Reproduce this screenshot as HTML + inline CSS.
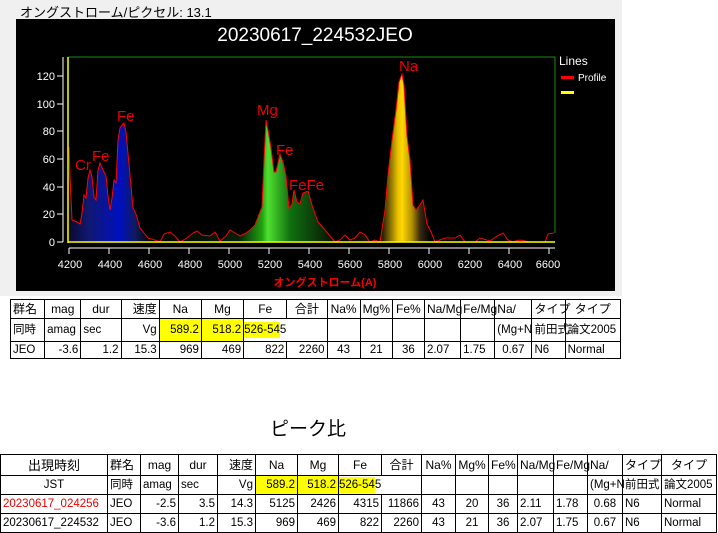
<!DOCTYPE html>
<html><head><meta charset="utf-8"><style>
body{margin:0;width:718px;height:531px;background:#fff;position:relative;overflow:hidden;font-family:"Liberation Sans","Noto Sans CJK JP",sans-serif}
.panel{position:absolute;left:0;top:0;width:622px;height:296px;background:#f0f0f0}
.lbl{position:absolute;left:20px;top:2px;font-size:13px;color:#000}
table{position:absolute;border-collapse:collapse;font-size:11.5px;table-layout:fixed}
td{border:1px solid #000;padding:0 2px;height:16px;white-space:nowrap;overflow:visible;line-height:15px}
.r{text-align:right}.c{text-align:center}.y{background:#ff0}
.h td{font-size:12px}
.t2 tr.b td{height:18px}
</style></head><body>
<div class="panel"></div>
<div class="lbl">オングストローム/ピクセル: 13.1</div>
<svg style="position:absolute;left:0;top:0" width="718" height="300">
<defs><linearGradient id="g" gradientUnits="userSpaceOnUse" x1="69" y1="0" x2="554" y2="0">
<stop offset="0" stop-color="#0a0a30"/><stop offset="0.04" stop-color="#101870"/><stop offset="0.105" stop-color="#0010c0"/><stop offset="0.136" stop-color="#101a60"/><stop offset="0.17" stop-color="#000"/><stop offset="0.35" stop-color="#05200a"/><stop offset="0.398" stop-color="#22a010"/><stop offset="0.41" stop-color="#50e030"/><stop offset="0.456" stop-color="#107010"/><stop offset="0.517" stop-color="#0a3008"/><stop offset="0.56" stop-color="#000"/><stop offset="0.647" stop-color="#2a2008"/><stop offset="0.678" stop-color="#e8c000"/><stop offset="0.687" stop-color="#ffd800"/><stop offset="0.707" stop-color="#b09000"/><stop offset="0.724" stop-color="#3a2a10"/><stop offset="0.745" stop-color="#000"/></linearGradient></defs>
<rect x="16" y="19" width="599" height="272" fill="#000"/>
<text x="315" y="41" fill="#fff" font-size="19" text-anchor="middle">20230617_224532JEO</text>
<polyline points="68,57 555,57 555,233" fill="none" stroke="#1a8a1a" stroke-width="1"/>
<path id="p" d="M69,147 L70,177 72,220 77,222 80,224 82,213 84,195 86,198 88,178 90,170 92,177 94,197 96,200 98,170 100,163 103,170 106,176 108,196 110,210 112,198 114,180 116,183 118,140 120,128 122,125 124,123 126,132 130,175 133,208 136,214 140,228 144,233 148,238 155,240 160,242 164,234 170,232 175,236 180,242 187,238 193,233 197,231 202,235 210,236 215,232 220,241 226,236 230,230 235,233 240,236 246,233 250,230 255,225 258,217 262,207 264,160 266,120 268,130 271,148 274,172 276,172 280,154 283,162 286,176 289,208 292,204 294,190 297,202 300,204 303,193 308,191 312,205 318,222 325,230 330,236 335,242 340,240 345,235 350,240 355,238 360,232 365,235 370,242 375,240 380,242 385,210 388,175 392,140 396,110 399,82 402,74 404,85 407,136 410,160 413,205 416,210 420,205 423,200 427,224 431,232 435,242 445,238 455,238 460,235 465,242 475,242 480,238 490,241 497,236 503,233 508,240 512,242 520,240 530,242 545,242 548,234 554,233" fill="none"/>
<path d="M69,242 L69,147 70,177 72,220 77,222 80,224 82,213 84,195 86,198 88,178 90,170 92,177 94,197 96,200 98,170 100,163 103,170 106,176 108,196 110,210 112,198 114,180 116,183 118,140 120,128 122,125 124,123 126,132 130,175 133,208 136,214 140,228 144,233 148,238 155,240 160,242 164,234 170,232 175,236 180,242 187,238 193,233 197,231 202,235 210,236 215,232 220,241 226,236 230,230 235,233 240,236 246,233 250,230 255,225 258,217 262,207 264,160 266,120 268,130 271,148 274,172 276,172 280,154 283,162 286,176 289,208 292,204 294,190 297,202 300,204 303,193 308,191 312,205 318,222 325,230 330,236 335,242 340,240 345,235 350,240 355,238 360,232 365,235 370,242 375,240 380,242 385,210 388,175 392,140 396,110 399,82 402,74 404,85 407,136 410,160 413,205 416,210 420,205 423,200 427,224 431,232 435,242 Z" fill="url(#g)"/>
<use href="#p" stroke="#f00" stroke-width="1"/>
<line x1="68" y1="57" x2="68" y2="243" stroke="#ff0" stroke-width="1.5"/>
<line x1="68" y1="242" x2="555" y2="242" stroke="#ff0" stroke-width="1.5"/>
<g stroke="#fff" stroke-width="1"><line x1="63" y1="57" x2="63" y2="242"/>
<line x1="57" y1="242" x2="63" y2="242"/><line x1="57" y1="214" x2="63" y2="214"/><line x1="57" y1="187" x2="63" y2="187"/><line x1="57" y1="159" x2="63" y2="159"/><line x1="57" y1="131" x2="63" y2="131"/><line x1="57" y1="104" x2="63" y2="104"/><line x1="57" y1="76" x2="63" y2="76"/>
<line x1="69" y1="248" x2="555" y2="248"/>
<line x1="69" y1="248" x2="69" y2="254"/><line x1="109" y1="248" x2="109" y2="254"/><line x1="149" y1="248" x2="149" y2="254"/><line x1="189" y1="248" x2="189" y2="254"/><line x1="229" y1="248" x2="229" y2="254"/><line x1="269" y1="248" x2="269" y2="254"/><line x1="309" y1="248" x2="309" y2="254"/><line x1="349" y1="248" x2="349" y2="254"/><line x1="389" y1="248" x2="389" y2="254"/><line x1="429" y1="248" x2="429" y2="254"/><line x1="469" y1="248" x2="469" y2="254"/><line x1="509" y1="248" x2="509" y2="254"/><line x1="549" y1="248" x2="549" y2="254"/></g>
<g fill="#fff" font-size="11" text-anchor="end"><text x="55" y="246">0</text><text x="55" y="218">20</text><text x="55" y="191">40</text><text x="55" y="163">60</text><text x="55" y="135">80</text><text x="55" y="108">100</text><text x="55" y="80">120</text></g>
<g fill="#fff" font-size="11" text-anchor="middle"><text x="70" y="268">4200</text><text x="110" y="268">4400</text><text x="150" y="268">4600</text><text x="190" y="268">4800</text><text x="230" y="268">5000</text><text x="270" y="268">5200</text><text x="310" y="268">5400</text><text x="350" y="268">5600</text><text x="390" y="268">5800</text><text x="430" y="268">6000</text><text x="470" y="268">6200</text><text x="510" y="268">6400</text><text x="548" y="268">6600</text></g>
<text x="325" y="286" fill="#f00" font-size="11" font-weight="bold" text-anchor="middle">オングストローム(A)</text>
<g fill="#e00" font-size="15"><text x="75" y="170">Cr</text><text x="92" y="161">Fe</text><text x="117" y="121">Fe</text><text x="257" y="115">Mg</text><text x="276" y="155">Fe</text><text x="289" y="190">FeFe</text><text x="399" y="71">Na</text></g>
<text x="559" y="65" fill="#fff" font-size="12">Lines</text>
<rect x="561" y="76" width="13" height="3" fill="#f00"/><text x="578" y="81" fill="#fff" font-size="10">Profile</text>
<rect x="561" y="91" width="13" height="3" fill="#ff0"/>
</svg>
<table style="left:10px;top:299px;width:611px">
<colgroup><col style="width:34px"><col style="width:36px"><col style="width:40px"><col style="width:38px"><col style="width:42px"><col style="width:42px"><col style="width:43px"><col style="width:40px"><col style="width:33px"><col style="width:32px"><col style="width:32px"><col style="width:36px"><col style="width:34px"><col style="width:37px"><col style="width:33px"><col style="width:55px"></colgroup>
<tr class="h" style="height:19px"><td>群名</td><td class="c">mag</td><td class="c">dur</td><td class="r">速度</td><td class="c">Na</td><td class="c">Mg</td><td class="c">Fe</td><td class="c">合計</td><td class="c">Na%</td><td class="c">Mg%</td><td class="c">Fe%</td><td>Na/Mg</td><td>Fe/Mg</td><td>Na/</td><td>タイプ</td><td class="c">タイプ</td></tr>
<tr style="height:23px"><td>同時</td><td>amag</td><td>sec</td><td class="r">Vg</td><td class="r y">589.2</td><td class="r y">518.2</td><td style="border-right:none;overflow:visible"><span class="y" style="margin-left:-2px;padding:2px 0">526-54</span>5</td><td style="border-left:none"></td><td></td><td></td><td></td><td></td><td></td><td>(Mg+N</td><td>前田式</td><td>論文2005</td></tr>
<tr><td>JEO</td><td class="r">-3.6</td><td class="r">1.2</td><td class="r">15.3</td><td class="r">969</td><td class="r">469</td><td class="r">822</td><td class="r">2260</td><td class="c">43</td><td class="c">21</td><td class="c">36</td><td>2.07</td><td>1.75</td><td class="c">0.67</td><td>N6</td><td>Normal</td></tr>
</table>
<div style="position:absolute;left:270px;top:414px;font-size:19px">ピーク比</div>
<table class="t2" style="left:0;top:454px;width:716px">
<colgroup><col style="width:107px"><col style="width:33px"><col style="width:38px"><col style="width:39px"><col style="width:38px"><col style="width:42px"><col style="width:41px"><col style="width:43px"><col style="width:40px"><col style="width:34px"><col style="width:33px"><col style="width:29px"><col style="width:36px"><col style="width:34px"><col style="width:35px"><col style="width:39px"><col style="width:55px"></colgroup>
<tr class="h" style="height:21px"><td class="c" style="font-size:13px">出現時刻</td><td>群名</td><td class="c">mag</td><td class="c">dur</td><td class="r">速度</td><td class="c">Na</td><td class="c">Mg</td><td class="c">Fe</td><td class="c">合計</td><td class="c">Na%</td><td class="c">Mg%</td><td class="c">Fe%</td><td>Na/Mg</td><td>Fe/Mg</td><td>Na/</td><td>タイプ</td><td class="c">タイプ</td></tr>
<tr class="b"><td class="c">JST</td><td>同時</td><td>amag</td><td>sec</td><td class="r">Vg</td><td class="r y">589.2</td><td class="r y">518.2</td><td style="border-right:none"><span class="y" style="margin-left:-2px;padding:2px 0">526-54</span>5</td><td style="border-left:none"></td><td></td><td></td><td></td><td></td><td></td><td>(Mg+N</td><td>前田式</td><td>論文2005</td></tr>
<tr class="b"><td style="color:#e00">20230617_024256</td><td>JEO</td><td class="r">-2.5</td><td class="r">3.5</td><td class="r">14.3</td><td class="r">5125</td><td class="r">2426</td><td class="r">4315</td><td class="r">11866</td><td class="c">43</td><td class="c">20</td><td class="c">36</td><td>2.11</td><td>1.78</td><td class="c">0.68</td><td>N6</td><td>Normal</td></tr>
<tr class="b"><td>20230617_224532</td><td>JEO</td><td class="r">-3.6</td><td class="r">1.2</td><td class="r">15.3</td><td class="r">969</td><td class="r">469</td><td class="r">822</td><td class="r">2260</td><td class="c">43</td><td class="c">21</td><td class="c">36</td><td>2.07</td><td>1.75</td><td class="c">0.67</td><td>N6</td><td>Normal</td></tr>
</table>
</body></html>
